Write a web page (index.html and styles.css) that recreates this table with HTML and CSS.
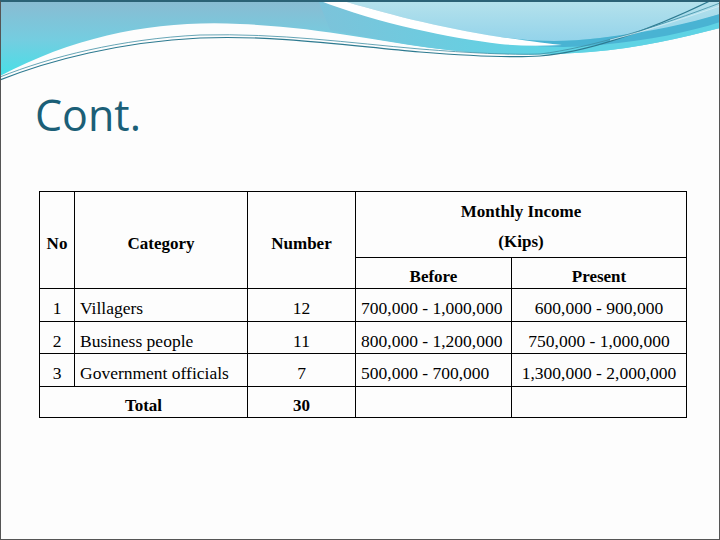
FILE: index.html
```html
<!DOCTYPE html>
<html lang="en">
<head>
<meta charset="utf-8">
<title>Cont.</title>
<link rel="stylesheet" href="styles.css">
</head>
<body>
<div class="slide">
  <svg class="banner" width="720" height="90" viewBox="0 0 720 90" aria-hidden="true">
    <defs>
      <linearGradient id="gA" x1="0" y1="0" x2="0" y2="80" gradientUnits="userSpaceOnUse">
        <stop offset="0" stop-color="#8abbd2"/>
        <stop offset="0.5" stop-color="#74cde0"/>
        <stop offset="1" stop-color="#42e2e8"/>
      </linearGradient>
      <linearGradient id="gB" x1="0" y1="0" x2="0" y2="45" gradientUnits="userSpaceOnUse">
        <stop offset="0" stop-color="#b6e2ec"/>
        <stop offset="1" stop-color="#90d2ea"/>
      </linearGradient>
      <linearGradient id="gC" x1="320" y1="0" x2="540" y2="0" gradientUnits="userSpaceOnUse">
        <stop offset="0" stop-color="#7cc3da"/>
        <stop offset="1" stop-color="#5fd3e4"/>
      </linearGradient>
    </defs>
    <path d="M0,0 H720 V28 C680,38 640,48 590,52 C540,56 490,55 440,49 C380,42 320,27 240,24 C160,20 80,34 0,76 Z" fill="url(#gA)"/>
    <path d="M318,0 C380,16 450,32 520,44 C560,49 600,46 640,40 L720,20 V28 C680,38 640,48 590,52 C540,56 490,55 440,49 C400,44 360,36 330,30 Z" fill="url(#gC)"/>
    <path d="M340,0 H720 V14 C690,24 650,33 600,38 C560,43 530,41 500,37 C440,28 380,12 340,0 Z" fill="url(#gB)"/>
    <path d="M500,37 C530,41 560,43 600,38 C650,32 690,23 720,14 V22 C690,32 650,40 600,45 C560,49 530,46 505,42 Z" fill="#49b3d3"/>
    <path d="M318,0 L340,0 C380,12 440,28 500,37 C530,41 550,44 562,45 C540,46 520,46 500,44 C450,38 380,24 318,0 Z" fill="#ffffff"/>
    <path d="M0,80 C50,60 120,42 200,38 C280,35 350,46 420,52 C470,56 510,58 540,56 C590,52 650,30 712,0" fill="none" stroke="#2d7a90" stroke-width="1.2"/>
    <path d="M0,77 C50,57 120,39 200,35 C280,33 350,43 420,49 C470,53 510,55 540,54 C590,48 660,26 720,3" fill="none" stroke="#3f8ea3" stroke-width="0.8"/>
    <path d="M610,40 C650,30 690,16 720,6" fill="none" stroke="#d6eff5" stroke-width="0.8"/>
  </svg>
  <h1 class="title">Cont.</h1>
  <table class="data">
    <colgroup>
      <col class="c1"><col class="c2"><col class="c3"><col class="c4"><col class="c5">
    </colgroup>
    <tr class="h1row">
      <th rowspan="2">No</th>
      <th rowspan="2">Category</th>
      <th rowspan="2">Number</th>
      <th colspan="2" class="income">Monthly Income<br>(Kips)</th>
    </tr>
    <tr class="h2row">
      <th>Before</th>
      <th>Present</th>
    </tr>
    <tr class="r1">
      <td class="ctr">1</td><td>Villagers</td><td class="ctr">12</td><td>700,000 - 1,000,000</td><td class="ctr">600,000 - 900,000</td>
    </tr>
    <tr class="r2">
      <td class="ctr">2</td><td>Business people</td><td class="ctr">11</td><td>800,000 - 1,200,000</td><td class="ctr">750,000 - 1,000,000</td>
    </tr>
    <tr class="r3">
      <td class="ctr">3</td><td>Government officials</td><td class="ctr">7</td><td>500,000 - 700,000</td><td class="ctr">1,300,000 - 2,000,000</td>
    </tr>
    <tr class="r4">
      <th colspan="2">Total</th><th>30</th><td></td><td></td>
    </tr>
  </table>
</div>
</body>
</html>
```
FILE: styles.css
```css
* { box-sizing: border-box; }
html, body { margin: 0; padding: 0; background: #ffffff; }
.slide {
  position: relative;
  width: 720px;
  height: 540px;
  background: #fdfdfd;
  overflow: hidden;
}
.slide::after {
  content: "";
  position: absolute;
  inset: 0;
  border: 1px solid #555555;
  border-top: 2px solid #2b6276;
  pointer-events: none;
}
.banner { display: block; }
.title {
  margin: 0;
  padding-left: 35px;
  font-family: "Open Sans", sans-serif;
  font-weight: 400;
  font-size: 43px;
  line-height: 50px;
  color: #1b5f77;
}
.data {
  margin: 51px 0 0 39px;
  border-collapse: collapse;
  table-layout: fixed;
  width: 647px;
  font-family: "Liberation Serif", "Times New Roman", serif;
  font-size: 17.5px;
  color: #000000;
}
.c1 { width: 35px; }
.c2 { width: 173px; }
.c3 { width: 108px; }
.c4 { width: 156px; }
.c5 { width: 175px; }
.data th, .data td {
  border: 1px solid #000000;
  padding: 7px 5px 0;
  vertical-align: middle;
  white-space: nowrap;
}
.data th {
  font-weight: bold;
  font-size: 17px;
  text-align: center;
}
.data td { text-align: left; }
.data td.ctr { text-align: center; }
.data th.income { line-height: 30px; padding-top: 5px; }
.h1row { height: 65px; }
.h2row { height: 31px; }
.r1 { height: 33px; }
.r2 { height: 32px; }
.r3 { height: 33px; }
.r4 { height: 31px; }
```
